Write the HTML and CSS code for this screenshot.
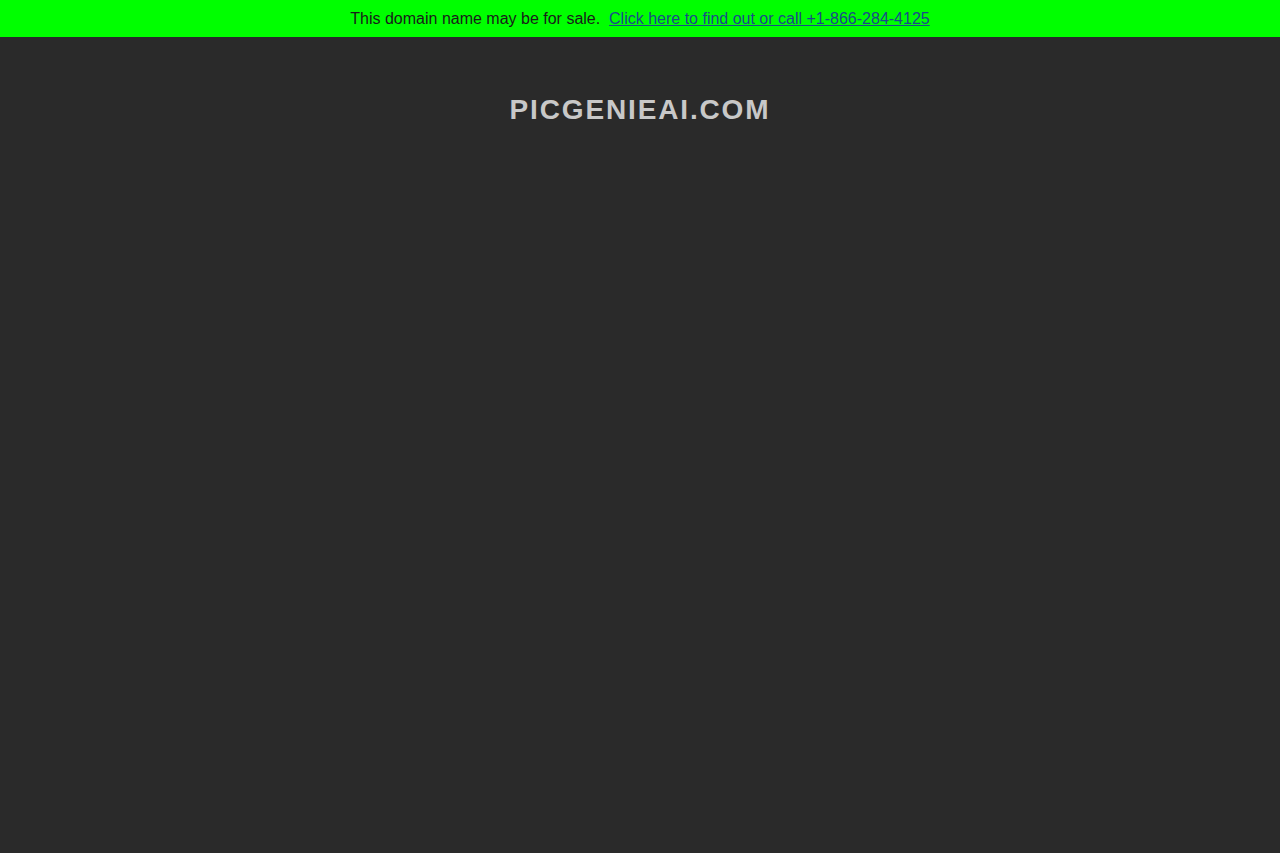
FILE: index.html
```
<!DOCTYPE html>
<html>
<head>
<meta charset="utf-8">
<link rel="stylesheet" href="styles.css">
</head>
<body>
<div class="banner">This domain name may be for sale.&nbsp; <a href="#" class="banner-link">Click here to find out or call +1-866-284-4125</a></div>
<h1 class="title">PICGENIEAI.COM</h1>
</body>
</html>
```
FILE: styles.css
```
html, body {
  margin: 0;
  padding: 0;
  background: #2a2a2a;
  font-family: "Liberation Sans", Arial, sans-serif;
}
.banner {
  background: #00ff00;
  height: 37px;
  line-height: 37px;
  text-align: center;
  font-size: 16px;
  color: #1a1a1a;
}
.banner-link {
  color: #1a4a8a;
  text-decoration: underline;
}
.title {
  margin: 57px 0 0 0;
  text-align: center;
  font-size: 28px;
  font-weight: bold;
  letter-spacing: 1.85px;
  color: #c8c8c8;
  line-height: 32px;
}
```
